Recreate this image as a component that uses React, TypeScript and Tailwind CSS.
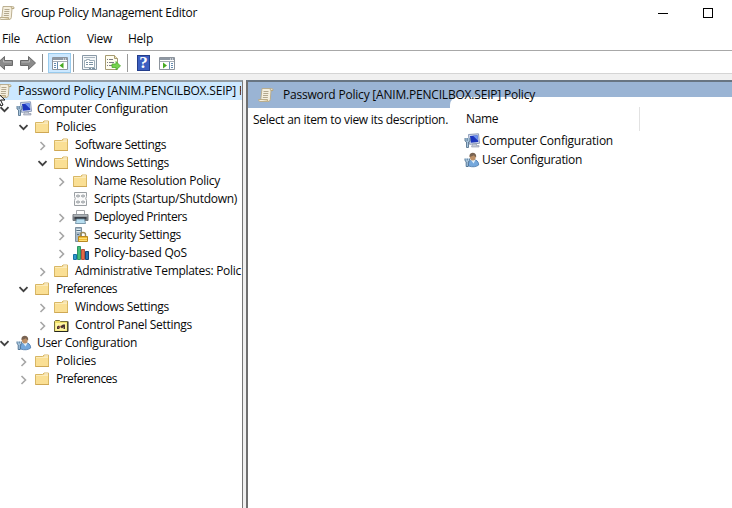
import { useLayoutEffect, useRef, type ReactNode } from "react";

/** Single-line label whose tracking is adjusted to fill the given width. */
function Label({ children, width }: { children: string; width: number }) {
  const ref = useRef<HTMLSpanElement>(null);
  useLayoutEffect(() => {
    const fit = () => {
      const el = ref.current;
      if (!el) return;
      el.style.letterSpacing = "0px";
      const natural = el.getBoundingClientRect().width;
      el.style.letterSpacing = `${(width - natural) / children.length}px`;
    };
    fit();
    document.fonts.ready.then(fit);
  }, [children, width]);
  return <span ref={ref} className="inline-block shrink-0 whitespace-pre">{children}</span>;
}

function Svg({ children, w = 16, h = 16 }: { children: ReactNode; w?: number; h?: number }) {
  return <svg width={w} height={h} viewBox={`0 0 ${w} ${h}`} className="block shrink-0 overflow-visible">{children}</svg>;
}

const Scroll = () => (
  <Svg>
    <path d="M4 1.500h9.500q2 0 1.500 2h-2l-.7 9q-.3 2-2 2H2q-1.500-.2-1.500-2h2.300z" fill="#f5efde" stroke="#b5a887" strokeWidth=".9" />
    <path d="M12.500 2q-.8 1 .3 1.600H15M2.500 12.500h7q0 2 1 2" fill="#ddcda4" stroke="#b09f78" strokeWidth=".8" />
    <path d="M5.500 4.500h5M5.300 6.500h5M5 8.500h5M4.800 10.500h5" stroke="#b3a88f" />
  </Svg>
);

const Folder = () => (
  <Svg>
    <path d="M.5 13.500v-10h7l1.500-1.500h4.500v11.500z" fill="#efd07f" stroke="#d8b765" />
    <path d="M9.500 2.500h3.500v1H9z" fill="#fffaf0" />
    <path d="M1 5h12v8H1z" fill="#fadf94" />
    <path d="M1 4.500h12" stroke="#fcebb8" />
    <path d="M.5 13.500h13.500" stroke="#cfa854" />
  </Svg>
);

const Computer = () => (
  <Svg>
    <path d="M4.500 1.500l10-.7 1 9.500-10 1z" fill="#d6deee" stroke="#8c9bb9" />
    <path d="M6 3l7.500-.7.8 6.700-7.500.8z" fill="#1d36bd" />
    <path d="M9 2.700l4.500-.4.700 5.500z" fill="#6d92ee" />
    <path d="M8.500 11h4v1.500h2.500V14H7.500z" fill="#c5cbd7" stroke="#8992a6" strokeWidth=".6" />
    <path d="M1 5v3l1.500 1v5.500h2V9L6 8V5M3.200 5v3" fill="#a8c5df" stroke="#58758d" strokeWidth=".9" />
  </Svg>
);

const User = () => (
  <Svg>
    <path d="M4.500 14q-.8-5.500 4-6.200 6-.5 6.200 5.200-4 3-10.200 1z" fill="#75a8dc" stroke="#4676aa" strokeWidth=".8" />
    <path d="M7 8l2.500 3.500L11.500 8z" fill="#e1eff9" />
    <ellipse cx="8.800" cy="4.800" rx="3" ry="3.600" fill="#bd9067" />
    <path d="M5.500 5Q5 1 8.500.7q4 .1 3.700 4.500-1.700-.5-2.200-2Q8 4.500 5.500 5z" fill="#786352" />
    <path d="M1 6.500v2.200l1.200 1v4.800h2V9.700l1.200-1V6.500M3.200 6.500v2" fill="#b7d4ea" stroke="#426789" strokeWidth=".9" />
  </Svg>
);

const Script = () => (
  <Svg>
    <path d="M1.500 1.500h12v4l-.7 2 .7 2v5h-12v-5l.7-2-.7-2z" fill="#fafafa" stroke="#9a9fa3" />
    <path d="M5 3.500L3.500 5 5 6.500M10 3.500L11.500 5 10 6.500M5 5h2m1 0h2M5 9.500L3.500 11 5 12.500M10 9.500l1.500 1.500-1.500 1.500M5 11h2m1 0h2" fill="none" stroke="#5d666e" strokeWidth=".9" />
  </Svg>
);

const Printer = () => (
  <Svg>
    <path d="M3.500 6V1.500h8V6" fill="#fff" stroke="#a4a7ab" />
    <path d="M0 5.500h15v6H0z" fill="#85898e" stroke="#70757a" />
    <path d="M.5 5.500h14v2H.5z" fill="#aeb4b9" />
    <path d="M1.500 8h12v2.500h-12z" fill="#393e46" />
    <path d="M3.500 10h8l1 4.500h-10z" fill="#b8def0" stroke="#65859b" strokeWidth=".8" />
  </Svg>
);

const Server = () => (
  <Svg>
    <path d="M2.500.5h6v14h-6z" fill="#a7b9c8" stroke="#7e909f" />
    <path d="M3.500 2.500h4M3.500 4.500h4" stroke="#e2edf2" />
    <path d="M3.500 3.500h4M4 7.500h2" stroke="#577082" />
    <path d="M7.500 10V7.500q0-2 2.500-2t2.500 2V10" fill="none" stroke="#9c8c59" strokeWidth="1.400" />
    <path d="M5.500 9.500h9v5h-9z" fill="#f0bd35" stroke="#b98821" />
    <path d="M6 11.500h8M6 13.500h8" stroke="#ffdf73" />
  </Svg>
);

const Bars = () => (
  <Svg>
    <path d="M.5 9.500h3v5h-3z" fill="#2e99c8" stroke="#1671a5" />
    <path d="M4.500 1.500h3v13h-3z" fill="#43bd78" stroke="#2c9466" />
    <path d="M8.500 4.500h3v10h-3z" fill="#e16a43" stroke="#b64e40" />
    <path d="M12.500 6.500h3v8h-3z" fill="#2975b5" stroke="#154777" />
  </Svg>
);

const ControlPanel = () => (
  <Svg>
    <path d="M.5 14.500v-10l1-1h4l1 1h7v10z" fill="#efdf68" stroke="#77713b" />
    <path d="M1.500 6h11v7.500h-11z" fill="#fff6a5" />
    <path d="M.5 14.500h13.500v-10" fill="none" stroke="#24251e" />
    <path d="M3 12V9.500l2-1 1 1 3-2h2V12H9.500v-2L8 11.500 6.500 10 5 12z" fill="#4a3230" />
    <path d="M4.500 10.500L7 9" stroke="#d17a55" />
  </Svg>
);

function Chevron({ open }: { open?: boolean }) {
  return (
    <Svg w={10} h={10}>
      <path d={open ? "M.5 3.200l4 4 4-4" : "M2.500 2l4 4-4 4"} fill="none" stroke={open ? "#404040" : "#a6a6a6"} strokeWidth={open ? 1.800 : 1.600} />
    </Svg>
  );
}

const Arrow = ({ right }: { right?: boolean }) => (
  <Svg>
    <path d={right ? "M.5 5.500h8v-4l7 6.500-7 6.500v-4h-8z" : "M15.500 5.500h-8v-4L.5 8l7 6.500v-4h8z"} fill="#8b8b8b" stroke="#6a6a6a" />
    <path d={right ? "M1.500 7h8V4.500" : "M14.500 7h-8V4.500"} fill="none" stroke="#b8b8b8" />
  </Svg>
);

const ConsoleIcon = ({ action }: { action?: boolean }) => (
  <Svg>
    <path d="M.5 2.500h15v12H.5z" fill="#fff" stroke="#8d949d" />
    <path d="M1 3h14v2H1z" fill="#8f98a3" />
    <path d="M11 4h1m1 0h1" stroke="#fff" />
    <path d="M1 6.500h14" stroke="#a6adb5" />
    {action ? (
      <><path d="M10.500 7v7M12 8.500h2m-2 2h2m-2 2h2" stroke="#668cb0" /><path d="M4 7.500l4 3-4 3z" fill="#47aa23" /></>
    ) : (
      <><path d="M5.500 7v7M2 8.500h2m-2 2h2m-2 2h2" stroke="#668cb0" /><path d="M11.500 7.500l-4 3 4 3z" fill="#47aa23" /></>
    )}
  </Svg>
);

const Properties = () => (
  <Svg>
    <path d="M.5.500h14v14H.5z" fill="#f3f6f8" stroke="#8998a6" />
    <path d="M2 2.500h11" stroke="#a8b4be" />
    <path d="M2.500 5.500h2v-1h3v1h5v7h-10z" fill="#fff" stroke="#8799a6" strokeWidth=".8" />
    <path d="M4 7.500h2m1 0h4M4 9.500h2m1 0h4M7 13.500h2m1 0h3" stroke="#7a91a2" />
  </Svg>
);

const Export = () => (
  <Svg>
    <path d="M.5.500h9l3 3v11H.5z" fill="#fffdf0" stroke="#a69b72" />
    <path d="M9.500.500v3h3" fill="#eee4b7" stroke="#a69b72" />
    <path d="M2 4.500h1M2 7.500h1M2 10.500h1M4 4.500h4M4 7.500h5M4 10.500h4" stroke="#7c7b83" />
    <path d="M7 9h4V6.500L15.500 11 11 15v-2.500H7z" fill="#77d34c" stroke="#4ba92c" strokeWidth=".8" />
  </Svg>
);

type NodeRow = { text: string; width: number; indent: string; icon: ReactNode; open?: boolean; leaf?: boolean };

const rows: NodeRow[] = [
  { text: "Computer Configuration", width: 131, indent: "pl-0", icon: <Computer />, open: true },
  { text: "Policies", width: 40, indent: "pl-[19px]", icon: <Folder />, open: true },
  { text: "Software Settings", width: 91, indent: "pl-[38px]", icon: <Folder /> },
  { text: "Windows Settings", width: 94, indent: "pl-[38px]", icon: <Folder />, open: true },
  { text: "Name Resolution Policy", width: 126, indent: "pl-[57px]", icon: <Folder /> },
  { text: "Scripts (Startup/Shutdown)", width: 143, indent: "pl-[57px]", icon: <Script />, leaf: true },
  { text: "Deployed Printers", width: 93, indent: "pl-[57px]", icon: <Printer /> },
  { text: "Security Settings", width: 87, indent: "pl-[57px]", icon: <Server /> },
  { text: "Policy-based QoS", width: 93, indent: "pl-[57px]", icon: <Bars /> },
  { text: "Administrative Templates: Polic", width: 166, indent: "pl-[38px]", icon: <Folder /> },
  { text: "Preferences", width: 61, indent: "pl-[19px]", icon: <Folder />, open: true },
  { text: "Windows Settings", width: 94, indent: "pl-[38px]", icon: <Folder /> },
  { text: "Control Panel Settings", width: 117, indent: "pl-[38px]", icon: <ControlPanel /> },
  { text: "User Configuration", width: 100, indent: "pl-0", icon: <User />, open: true },
  { text: "Policies", width: 40, indent: "pl-[19px]", icon: <Folder /> },
  { text: "Preferences", width: 61, indent: "pl-[19px]", icon: <Folder /> },
];

const heading = "Password Policy [ANIM.PENCILBOX.SEIP] Policy";

export default function App() {
  return (
    <div className="flex h-[508px] w-[732px] flex-col overflow-hidden bg-white font-['Open_Sans','Noto_Sans',sans-serif] text-[12px] leading-[18px] text-[#080808]">
      <header className="flex h-[26px] shrink-0 items-center">
        <div className="-ml-px mr-[6px]"><Scroll /></div>
        <Label width={176}>Group Policy Management Editor</Label>
        <div className="ml-auto flex items-center gap-[35px] pr-[19px]">
          <div className="h-px w-[10px] bg-black" />
          <div className="h-[10px] w-[10px] border border-black" />
        </div>
      </header>

      <nav className="flex h-[24px] shrink-0 items-center pt-[2px] pl-[2px]">
        <div className="w-[34px]"><Label width={18}>File</Label></div>
        <div className="w-[51px]"><Label width={35}>Action</Label></div>
        <div className="w-[41px]"><Label width={25}>View</Label></div>
        <Label width={25}>Help</Label>
      </nav>

      <div className="flex h-[24px] shrink-0 items-center border-y border-t-[#a8a8a8] border-b-[#d5d5d5] pt-[2px]">
        <div className="-ml-[3px]"><Arrow /></div>
        <div className="ml-[7px]"><Arrow right /></div>
        <div className="ml-[6px] h-[18px] w-px bg-[#888]" />
        <div className="ml-[5px] flex h-[20px] w-[23px] items-center justify-center border border-[#99cbed] bg-[#cce8ff]"><ConsoleIcon /></div>
        <div className="ml-[2px] h-[18px] w-px bg-[#999]" />
        <div className="ml-[8px]"><Properties /></div>
        <div className="ml-[7px]"><Export /></div>
        <div className="ml-[6px] h-[18px] w-px bg-[#999]" />
        <div className="ml-[9px] flex h-4 w-[13px] items-center justify-center border border-[#233d8b] bg-[#3c5fc1] font-['Liberation_Serif',serif] text-[17px] font-bold leading-4 text-white">?</div>
        <div className="ml-[9px]"><ConsoleIcon action /></div>
      </div>
      <div className="h-[6px] shrink-0 bg-[#f0f0f0]" />

      <main className="flex min-h-0 flex-1 bg-[#f0f0f0]">
        <aside className="relative w-[243px] shrink-0 overflow-hidden border-t-2 border-r border-t-[#929ba2] border-r-[#777] bg-white">
          <div className="flex h-[18px] items-center bg-[#cce8ff]">
            <div className="-ml-[4px] mr-[6px]"><Scroll /></div>
            <div className="w-[223px] overflow-hidden"><Label width={252}>{heading}</Label></div>
          </div>
          {rows.map((row, i) => (
            <div key={i} className={`flex h-[18px] items-center ${row.indent}`}>
              <div className="mr-[6px] w-[10px] shrink-0">{!row.leaf && <Chevron open={row.open} />}</div>
              {row.icon}
              <div className="ml-[5px]"><Label width={row.width}>{row.text}</Label></div>
            </div>
          ))}
          <svg className="absolute top-[8px] left-[-6px]" width="13" height="18" viewBox="0 0 13 18">
            <path d="M1.500 1v13l3-3 2.500 5 2-1-2.500-5H11z" fill="white" stroke="#111" />
          </svg>
        </aside>
        <div className="w-[3px] shrink-0" />
        <section className="flex min-w-0 flex-1 flex-col border-t-2 border-l-2 border-t-[#687582] border-l-[#707070] bg-white">
          <div className="flex h-[26px] shrink-0 items-center bg-[#9ab4d4] pl-[10px]">
            <Scroll />
            <div className="relative z-10 ml-[9px]"><Label width={252}>{heading}</Label></div>
          </div>
          <div className="flex min-h-0 flex-1">
            <div className="w-[202px] shrink-0 pt-[3px] pl-[5px]"><Label width={195}>Select an item to view its description.</Label></div>
            <div className="-mt-[11px] min-w-0 flex-1 rounded-tl-[8px] bg-white">
              <div className="mt-[10px] flex h-[24px] w-[190px] items-center border-r border-[#e2e2e2] pl-[16px]"><Label width={32}>Name</Label></div>
              <div className="flex h-[19px] items-center pl-[14px]">
                <Computer /><div className="ml-[2px]"><Label width={131}>Computer Configuration</Label></div>
              </div>
              <div className="flex h-[19px] items-center pl-[14px]">
                <User /><div className="ml-[2px]"><Label width={100}>User Configuration</Label></div>
              </div>
            </div>
          </div>
        </section>
      </main>
    </div>
  );
}
